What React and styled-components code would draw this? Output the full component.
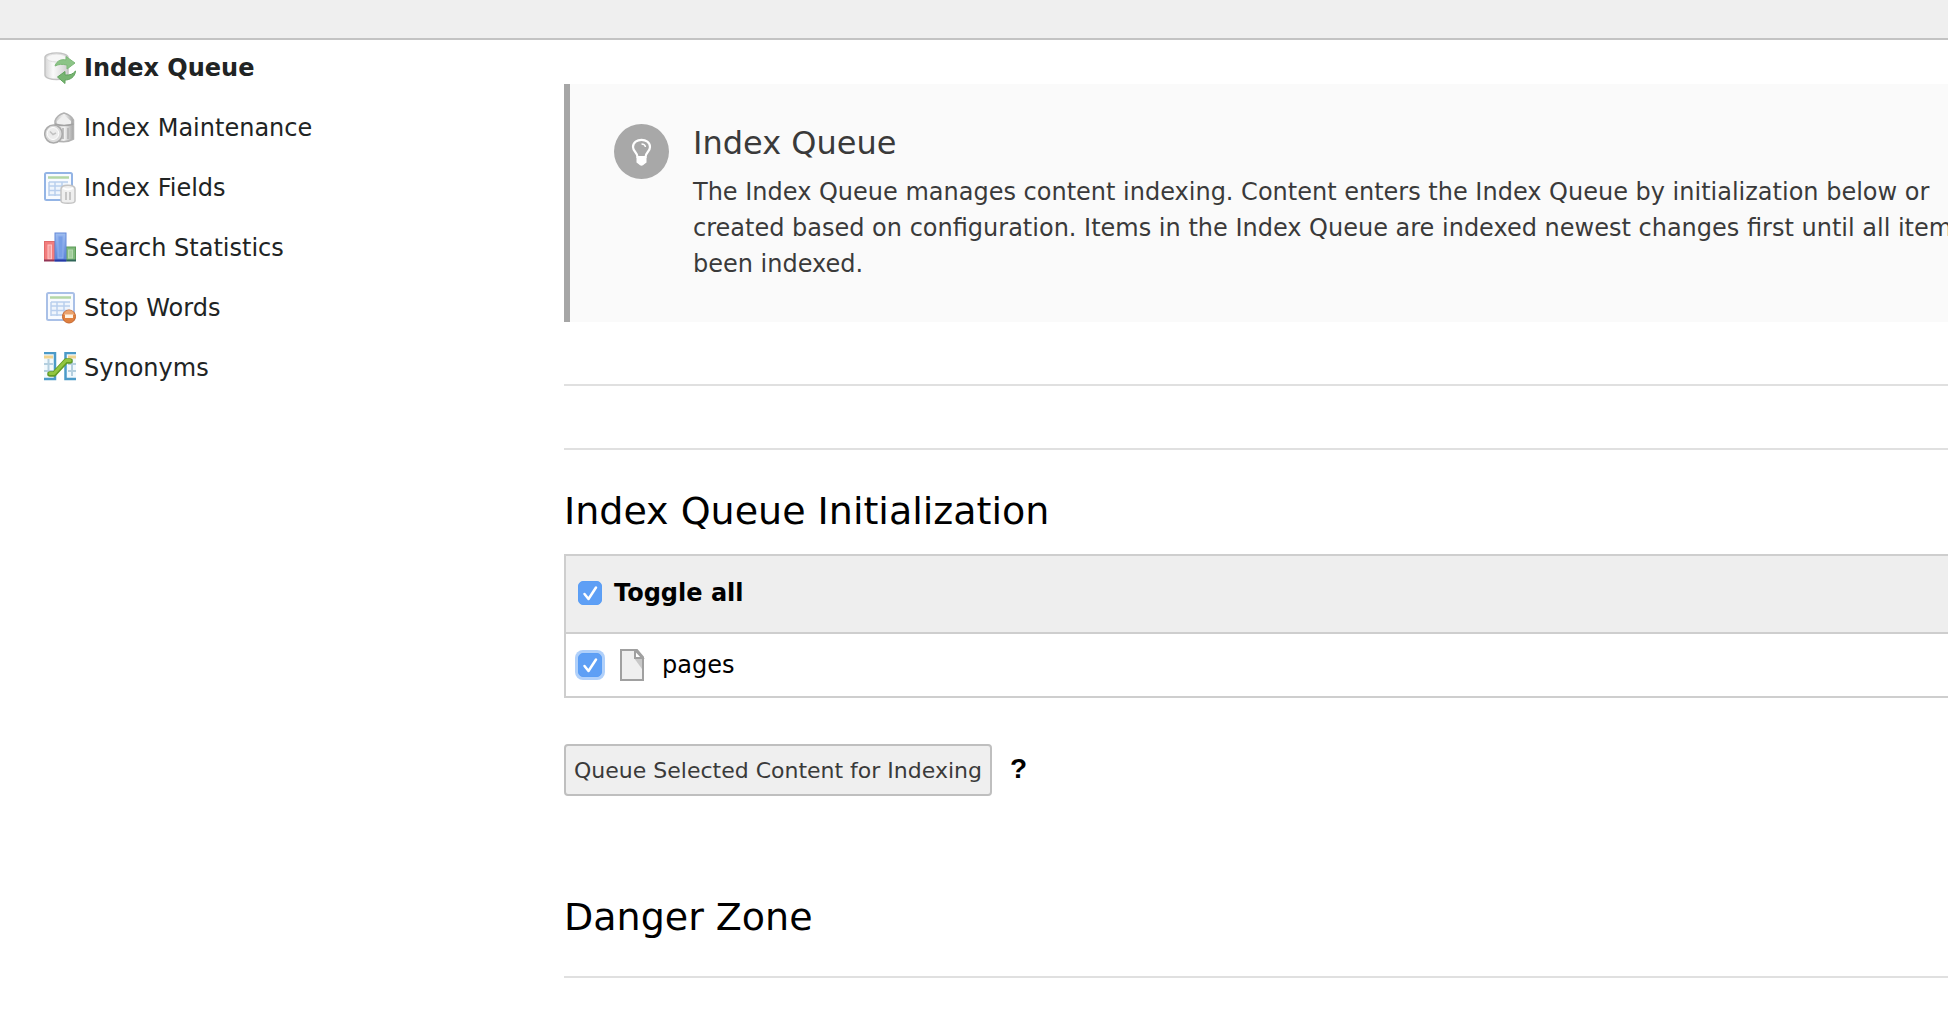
import React, { useState } from "react";
import styled, { createGlobalStyle } from "styled-components";

const GlobalStyle = createGlobalStyle`
  *, *::before, *::after { box-sizing: border-box; }
  body {
    margin: 0;
    background: #fff;
    color: #000;
    font-family: Verdana, "DejaVu Sans", sans-serif;
    font-size: 24px;
    line-height: 36px;
    overflow-x: hidden;
  }
`;

const DocHeader = styled.header`
  height: 40px;
  background: #efefef;
  border-bottom: 2px solid #c3c3c3;
`;

const Layout = styled.div`
  display: grid;
  grid-template-columns: 564px minmax(0, 1fr);
`;

const Menu = styled.nav`
  display: flex;
  flex-direction: column;
  align-items: flex-start;
  gap: 24px;
  padding: 10px 0 0 44px;
`;

const MenuLink = styled.a`
  display: flex;
  align-items: center;
  gap: 8px;
  color: #212424;
  font-weight: ${(p) => (p.$active ? 700 : 400)};
  text-decoration: none;
`;

const Content = styled.main`
  padding-top: 44px;
`;

const Callout = styled.section`
  display: flex;
  gap: 24px;
  padding: 40px 0 40px 44px;
  border-left: 6px solid #a6a6a6;
  background: #fafafa;
  color: #3a3a3a;
  overflow: hidden;
`;

const CalloutIcon = styled.svg`
  flex: none;
  width: 55px;
  height: 55px;
`;

const CalloutTitle = styled.h4`
  margin: 0 0 12px;
  font-size: 32px;
  font-weight: 400;
  line-height: 38px;
`;

const CalloutText = styled.p`
  margin: 0;
  white-space: nowrap;
`;

const Rule = styled.hr`
  height: 2px;
  margin: ${(p) => p.$top}px 0 0;
  border: 0;
  background: #e0e0e0;
`;

const Heading = styled.h2`
  margin: ${(p) => p.$top}px 0 0;
  font-size: 38px;
  font-weight: 400;
  line-height: 46px;
`;

const QueueTable = styled.table`
  width: calc(100% + 2px);
  margin-top: 20px;
  border-collapse: separate;
  border-spacing: 0;
  border: 2px solid #cecece;
`;

const HeadCell = styled.th`
  height: 78px;
  padding: 0 12px 2px;
  border-bottom: 2px solid #cecece;
  background: #eee;
  text-align: left;
`;

const Cell = styled.td`
  height: 62px;
  padding: 0 12px;
`;

const CheckLabel = styled.label`
  display: flex;
  align-items: center;
`;

const CheckBox = styled.span`
  position: relative;
  display: block;
  width: 24px;
  height: 24px;
  margin-right: 12px;

  input {
    appearance: none;
    display: block;
    width: 24px;
    height: 24px;
    margin: 0;
    border: 1px solid #b5b5b5;
    border-radius: 5px;
    background: #fff;
    box-shadow: ${(p) => (p.$ring ? "0 0 0 3px #b0d0fa" : "none")};
  }

  input:checked {
    border-color: #5a9ef5;
    background: #5e9ff5;
  }

  svg {
    position: absolute;
    inset: 0;
    pointer-events: none;
  }
`;

const FileIcon = styled.svg`
  width: 36px;
  height: 32px;
  margin: 0 10px 0 2px;
`;

const Actions = styled.div`
  display: flex;
  align-items: center;
  gap: 18px;
  margin-top: 46px;
`;

const QueueButton = styled.button`
  height: 52px;
  padding: 0 8px;
  border: 2px solid #bfbfbf;
  border-radius: 4px;
  background: #efefef;
  color: #3a3a3a;
  font-family: inherit;
  font-size: 22px;
`;

const Help = styled.a`
  padding-bottom: 2px;
  color: #000;
  font-family: Arial, "Liberation Sans", sans-serif;
  font-size: 28px;
  font-weight: 700;
  text-decoration: none;
`;

function QueueIcon() {
  return (
    <svg width="32" height="32" viewBox="0 0 32 32" aria-hidden="true">
      <defs>
        <linearGradient id="drum">
          <stop offset="0" stopColor="#d6d6d6" />
          <stop offset=".35" stopColor="#fafafa" />
          <stop offset="1" stopColor="#cfcfcf" />
        </linearGradient>
      </defs>
      <path d="M1 5.500C1 -.5 24 -.5 24 5.500V23C24 29 1 29 1 23Z" fill="url(#drum)" stroke="#c3c3c3" strokeWidth="1.500" />
      <ellipse cx="12.500" cy="6" rx="10" ry="4" fill="#f6f6f6" stroke="#dcdcdc" />
      <path d="M11 14C13 8 18 7 22 8V4.500L31 11L23 17V13C18 12 15 12 11 14Z" fill="#8cc487" stroke="#7db878" />
      <path d="M31.500 19C31 25 26 28 21 28V31.500L13.500 25L21 19.500V23C26 23.500 29 22 31.500 19Z" fill="#77b471" stroke="#61a35d" />
    </svg>
  );
}

function MaintenanceIcon() {
  return (
    <svg width="32" height="32" viewBox="0 0 32 32" aria-hidden="true">
      <defs>
        <linearGradient id="bin">
          <stop offset="0" stopColor="#c6c6c6" />
          <stop offset=".5" stopColor="#f2f2f2" />
          <stop offset="1" stopColor="#a2a2a2" />
        </linearGradient>
      </defs>
      <path d="M11 9Q13 3 20 1Q27 3 29.500 8V27Q21 32 11 28Z" fill="url(#bin)" stroke="#b2b2b2" strokeWidth="1.500" />
      <path d="M13 9L20 3L27 9V12H13Z" fill="#efefef" />
      <path d="M11 12Q20 15 29.500 12" fill="none" stroke="#a2a2a2" strokeWidth="1.500" />
      <path d="M19 16V27M24 16V27" stroke="#b0b0b0" strokeWidth="1.500" />
      <ellipse cx="9.500" cy="22" rx="8.800" ry="9" fill="#dcdcdc" stroke="#aaa" strokeWidth="1.500" />
      <ellipse cx="9" cy="21.500" rx="5.800" ry="6" fill="#ececec" stroke="#fff" />
      <path d="M6 19.500L9 22.500L12 21" fill="none" stroke="#c2c2c2" strokeWidth="1.500" />
    </svg>
  );
}

function Sheet({ x = 0, edge, children }) {
  return (
    <svg width="32" height="32" viewBox="0 0 32 32" aria-hidden="true">
      <rect x={1 + x} y="1" width="27" height="27" rx="1.500" fill="#f8fbff" stroke={edge} strokeWidth="2" />
      <path d={`M${4 + x} 5.500H${25 + x}`} stroke="#b4d7a7" strokeWidth="2.500" />
      <rect x={5 + x} y="10" width="19" height="14" fill="#eff5fc" />
      <path d={`M${5 + x} 10H${24 + x}M${5 + x} 14H${24 + x}M${5 + x} 18.500H${24 + x}M${5 + x} 23H${24 + x}M${5 + x} 10V24M${11 + x} 10V24M${18 + x} 10V24`} stroke="#b9cfed" strokeWidth="1.500" fill="none" />
      {children}
    </svg>
  );
}

function FieldsIcon() {
  return (
    <Sheet edge="#93b4e5">
      <path d="M17 17C17 12 31 12 31 17V29C31 32 17 32 17 29Z" fill="#efefef" stroke="#c3c3c3" strokeWidth="1.500" />
      <path d="M19 16Q24 19 29 16" fill="none" stroke="#fff" strokeWidth="2" />
      <path d="M22 20V28M26 20V28" stroke="#c6c6c6" strokeWidth="2" />
    </Sheet>
  );
}

function StopIcon() {
  return (
    <Sheet x={2} edge="#a9c0e7">
      <circle cx="25" cy="24.500" r="6.500" fill="#df803f" stroke="#c5642c" />
      <path d="M19.500 23C20 16.500 30 16.500 30.500 23Z" fill="#eba36e" />
      <rect x="21" y="22.500" width="8" height="3.500" fill="#fff3e4" />
    </Sheet>
  );
}

function StatisticsIcon() {
  return (
    <svg width="32" height="32" viewBox="0 0 32 32" aria-hidden="true">
      <defs>
        <linearGradient id="blueBar" x2="0" y2="1">
          <stop offset="0" stopColor="#a0bff0" />
          <stop offset="1" stopColor="#5580d8" />
        </linearGradient>
      </defs>
      <rect x=".5" y="9.500" width="10" height="19" fill="#f27d7d" stroke="#e06a6a" />
      <rect x="4" y="13" width="3.500" height="14" fill="#f4a0a0" stroke="#ffc4c4" />
      <rect x="22" y="15" width="9.500" height="13.500" fill="#7fb87a" stroke="#5c9c58" />
      <rect x="24.500" y="18" width="4" height="8" fill="#a3cd9c" stroke="#b5d8af" />
      <rect x="11" y="1" width="11" height="28" fill="url(#blueBar)" stroke="#6488d8" />
      <rect x="14" y="4" width="5" height="22" fill="#779ee6" stroke="#91b0ed" />
      <path d="M0 28.500H10.500" stroke="#923555" strokeWidth="2" />
      <path d="M10.500 28.500H22.500" stroke="#2638a4" strokeWidth="2" />
      <path d="M22.500 28.500H32" stroke="#2e6457" strokeWidth="2" />
    </svg>
  );
}

function SynonymsIcon() {
  return (
    <svg width="32" height="32" viewBox="0 0 32 32" aria-hidden="true">
      <path d="M0 1H11V27H0ZM32 1H22V27H32Z" fill="#f2f9fd" />
      <path d="M0 5H9M24 5H32" stroke="#f0d490" strokeWidth="3" />
      <path d="M0 12H9M0 19H9M4.500 7V24M24 12H32M24 19H32M28 7V24" stroke="#b4cfdf" strokeWidth="2" />
      <path d="M0 1H11V27H0M32 1H21.500V27H32" fill="none" stroke="#4b9ac8" strokeWidth="2.500" />
      <path d="M6 22H10L22 9H26" fill="none" stroke="#619b25" strokeWidth="5.500" strokeLinecap="round" strokeLinejoin="round" />
      <path d="M6 21.500H10L22 8.500H26" fill="none" stroke="#92c640" strokeWidth="3" strokeLinecap="round" strokeLinejoin="round" />
    </svg>
  );
}

const menuItems = [
  { label: "Index Queue", icon: QueueIcon, active: true },
  { label: "Index Maintenance", icon: MaintenanceIcon },
  { label: "Index Fields", icon: FieldsIcon },
  { label: "Search Statistics", icon: StatisticsIcon },
  { label: "Stop Words", icon: StopIcon },
  { label: "Synonyms", icon: SynonymsIcon },
];

function Check({ id, ring, checked, onChange }) {
  return (
    <CheckBox $ring={ring}>
      <input id={id} type="checkbox" checked={checked} onChange={onChange} />
      {checked && (
        <svg width="24" height="24" viewBox="0 0 24 24" fill="none" aria-hidden="true">
          <path d="M6.500 13L10.500 18L18 6.500" stroke="#fff" strokeWidth="2.500" strokeLinecap="round" strokeLinejoin="round" />
        </svg>
      )}
    </CheckBox>
  );
}

export default function App() {
  const [pages, setPages] = useState(true);
  const toggle = (event) => setPages(event.target.checked);

  return (
    <>
      <GlobalStyle />
      <DocHeader />
      <Layout>
        <Menu>
          {menuItems.map(({ label, icon: Icon, active }) => (
            <MenuLink key={label} href="#" $active={active}>
              <Icon />
              {label}
            </MenuLink>
          ))}
        </Menu>
        <Content>
          <Callout>
            <CalloutIcon viewBox="0 0 55 55" aria-hidden="true">
              <circle cx="27.500" cy="27.500" r="27.500" fill="#a8a8a8" />
              <path d="M23.500 33C23.500 28.500 19 27.500 19 23C19 13.500 36 13.500 36 23C36 27.500 31.500 28.500 31.500 33Z" fill="none" stroke="#fff" strokeWidth="2.200" />
              <path d="M27.500 20Q31 20 31.500 23" fill="none" stroke="#fff" strokeWidth="1.400" />
              <path d="M22.500 32.500H32.500V38.500L30.500 40Q27.500 43.500 24.500 40L22.500 38.500Z" fill="#fff" />
            </CalloutIcon>
            <div>
              <CalloutTitle>Index Queue</CalloutTitle>
              <CalloutText>
                The Index Queue manages content indexing. Content enters the Index Queue by initialization below or
                <br />
                created based on configuration. Items in the Index Queue are indexed newest changes first until all items
                <br />
                been indexed.
              </CalloutText>
            </div>
          </Callout>
          <Rule $top={62} />
          <Rule $top={62} />
          <Heading $top={38}>Index Queue Initialization</Heading>
          <QueueTable>
            <thead>
              <tr>
                <HeadCell>
                  <CheckLabel htmlFor="toggle-all">
                    <Check id="toggle-all" checked={pages} onChange={toggle} />
                    Toggle all
                  </CheckLabel>
                </HeadCell>
              </tr>
            </thead>
            <tbody>
              <tr>
                <Cell>
                  <CheckLabel htmlFor="pages">
                    <Check id="pages" ring checked={pages} onChange={toggle} />
                    <FileIcon viewBox="-4 0 36 32" aria-hidden="true">
                      <path d="M1 1H17L23 8V31H1Z" fill="#efefef" stroke="#a0a0a0" strokeWidth="2" />
                      <path d="M14 9H22V20Z" fill="#c8c8c8" />
                      <path d="M15 1.500V9H22.500L16 2Z" fill="#fff" stroke="#a0a0a0" strokeWidth="2" />
                    </FileIcon>
                    pages
                  </CheckLabel>
                </Cell>
              </tr>
            </tbody>
          </QueueTable>
          <Actions>
            <QueueButton type="button">Queue Selected Content for Indexing</QueueButton>
            <Help href="#">?</Help>
          </Actions>
          <Heading $top={98}>Danger Zone</Heading>
          <Rule $top={36} />
        </Content>
      </Layout>
    </>
  );
}
